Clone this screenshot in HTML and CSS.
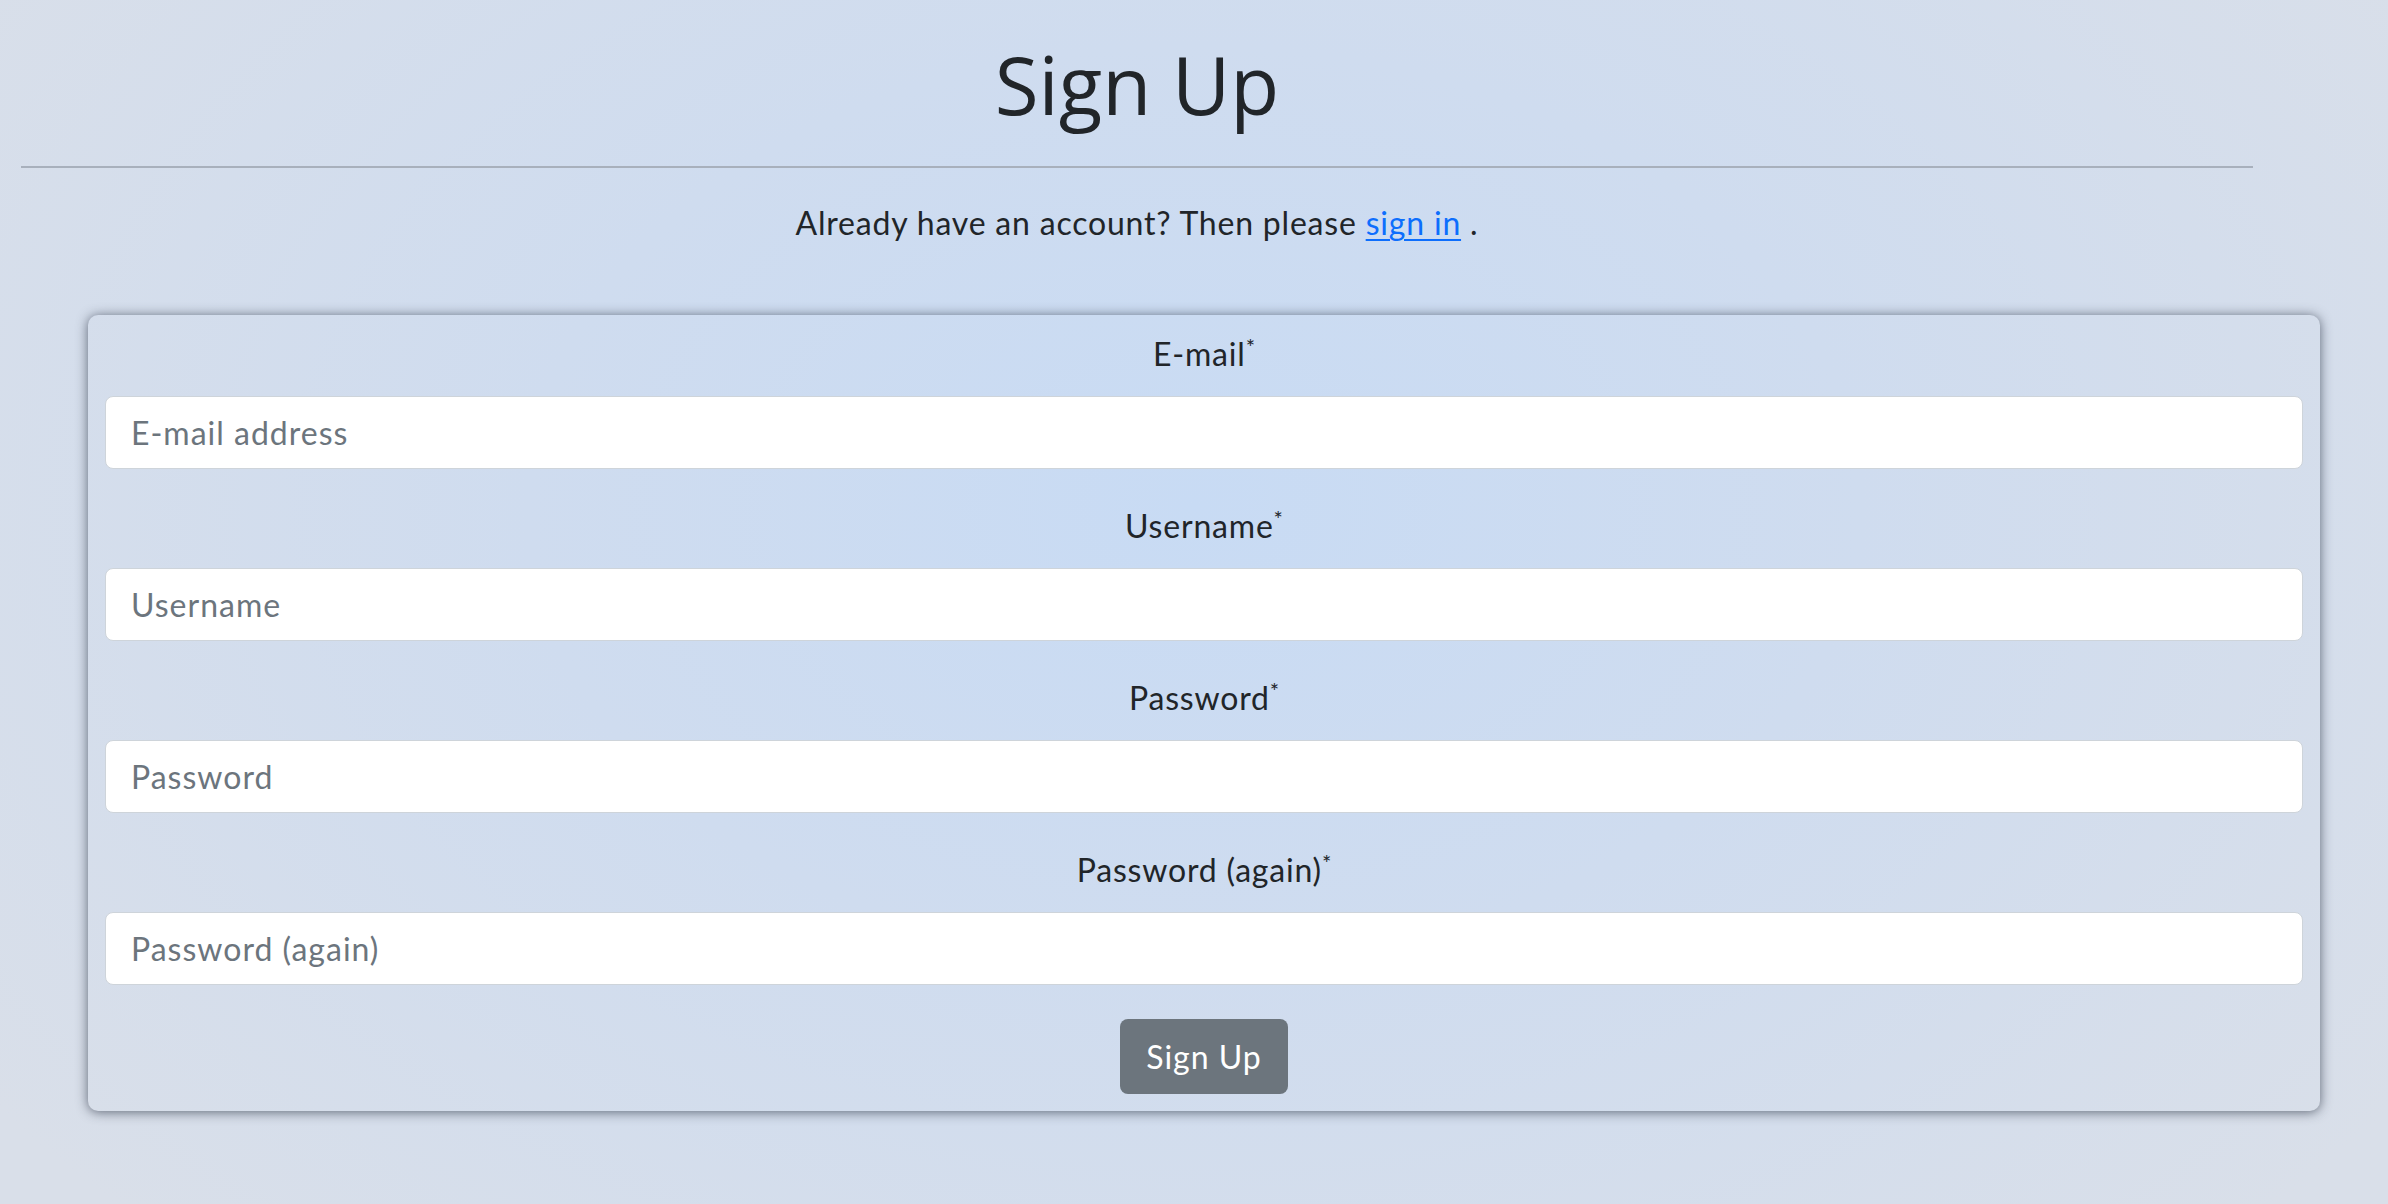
FILE: index.html
```html
<!DOCTYPE html>
<html lang="en">
<head>
<meta charset="utf-8">
<title>Sign Up</title>
<link rel="stylesheet" href="styles.css">
</head>
<body>
<main class="page">
  <header class="intro">
    <h1 class="title">Sign Up</h1>
    <hr class="rule">
    <p class="lead">Already have an account? Then please <a class="link" href="#">sign in</a> .</p>
  </header>
  <form class="card">
    <div class="field">
      <label class="label" for="email">E-mail<sup class="req">*</sup></label>
      <input class="input" id="email" type="email" placeholder="E-mail address">
    </div>
    <div class="field">
      <label class="label" for="username">Username<sup class="req">*</sup></label>
      <input class="input" id="username" type="text" placeholder="Username">
    </div>
    <div class="field">
      <label class="label" for="password1">Password<sup class="req">*</sup></label>
      <input class="input" id="password1" type="password" placeholder="Password">
    </div>
    <div class="field">
      <label class="label" for="password2">Password (again)<sup class="req">*</sup></label>
      <input class="input" id="password2" type="password" placeholder="Password (again)">
    </div>
    <div class="actions">
      <button class="btn" type="submit">Sign Up</button>
    </div>
  </form>
</main>
</body>
</html>
```
FILE: styles.css
```css
html, body {
  margin: 0;
  padding: 0;
}

body {
  min-height: 1204px;
  background: radial-gradient(ellipse 62% 85% at 50% 42%, #c8dbf4 0%, #cfdcef 45%, #d9dfe9 100%);
  background-color: #d9dfe9;
  color: #212529;
  font-family: Lato, "Noto Sans", sans-serif;
  font-size: 32px;
  line-height: 48px;
  letter-spacing: 0.8px;
}

.page {
  padding-top: 36px;
}

.intro {
  margin: 0 135px 0 21px;
  text-align: center;
}

.title {
  margin: 0;
  font-family: "Open Sans", sans-serif;
  font-weight: 400;
  font-size: 80px;
  line-height: 96px;
  letter-spacing: 0;
  color: #212529;
}

.rule {
  margin: 34px 0 0;
  height: 0;
  border: 0;
  border-top: 2px solid #a8b0bc;
}

.lead {
  margin: 31px 0 0;
}

.link {
  color: #0d6efd;
  text-decoration: underline;
  text-underline-offset: 4px;
  text-decoration-thickness: 2px;
}

.card {
  margin: 68px 68px 0 88px;
  padding: 18px 17px 17px 17px;
  border-radius: 10px;
  box-shadow: 0 1px 12px rgba(36, 44, 60, 0.68);
  display: flex;
  flex-direction: column;
}

.field {
  display: flex;
  flex-direction: column;
  align-items: stretch;
}

.field + .field {
  margin-top: 36px;
}

.label {
  display: block;
  text-align: center;
  line-height: 42px;
  margin-bottom: 21px;
  color: #212529;
}

.req {
  font-size: 22px;
  line-height: 0;
  vertical-align: 11px;
  letter-spacing: 0;
}

.input {
  box-sizing: border-box;
  height: 73px;
  width: 100%;
  margin: 0;
  padding: 0 25px;
  border: 1px solid #ced4da;
  border-radius: 8px;
  background: #ffffff;
  font-family: Lato, "Noto Sans", sans-serif;
  font-size: 32px;
  letter-spacing: 1px;
  color: #212529;
}

.input::placeholder {
  color: #6c757d;
  opacity: 1;
}

.actions {
  display: flex;
  justify-content: center;
  margin-top: 34px;
}

.btn {
  height: 75px;
  padding: 0 26px;
  border: 0;
  border-radius: 8px;
  background: #6c757d;
  color: #ffffff;
  font-family: Lato, "Noto Sans", sans-serif;
  font-size: 32px;
  letter-spacing: 1px;
  cursor: pointer;
}
```
